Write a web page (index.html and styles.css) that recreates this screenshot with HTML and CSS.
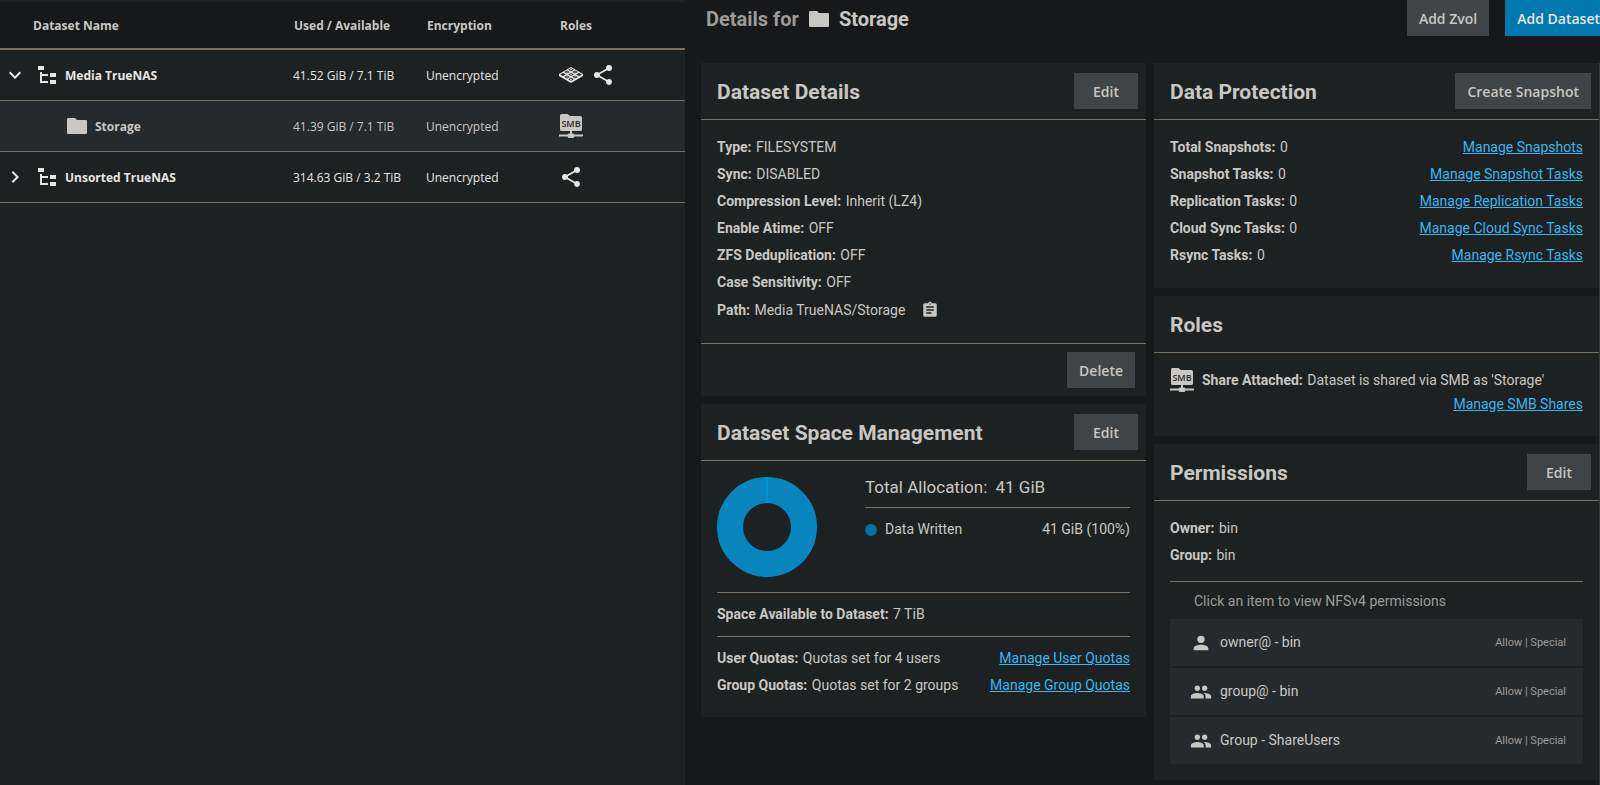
FILE: index.html
```html
<!DOCTYPE html>
<html lang="en">

<head>
    <meta charset="UTF-8">
    <meta name="viewport" content="width=device-width, initial-scale=1.0">
    <title>Datasets</title>
    <link rel="stylesheet" href="styles.css">
</head>

<body>

    <!-- shared icons -->
    <svg class="sprite" aria-hidden="true">
        <symbol id="chevron-down" viewBox="0 0 24 24"><path d="M7.41,8.58L12,13.17L16.59,8.58L18,10L12,16L6,10L7.41,8.58Z" /></symbol>
        <symbol id="chevron-right" viewBox="0 0 24 24"><path d="M8.59,16.58L13.17,12L8.59,7.41L10,6L16,12L10,18L8.59,16.58Z" /></symbol>
        <symbol id="file-tree" viewBox="0 0 24 24"><path d="M3,3H9V7H3V3M15,10H21V14H15V10M15,17H21V21H15V17M13,13H7V18H13V20H5V9H7V11H13V13Z" /></symbol>
        <symbol id="folder" viewBox="0 0 24 24"><path d="M10,4H3.2Q2,4 2,5.2V18.8Q2,20 3.2,20H20.8Q22,20 22,18.8V7.2Q22,6 20.8,6H12L10,4Z" /></symbol>
        <symbol id="share" viewBox="0 0 24 24"><path d="M18,16.08C17.24,16.08 16.56,16.38 16.04,16.85L8.91,12.7C8.96,12.47 9,12.24 9,12C9,11.76 8.96,11.53 8.91,11.3L15.96,7.19C16.5,7.69 17.21,8 18,8A3,3 0 0,0 21,5A3,3 0 0,0 18,2A3,3 0 0,0 15,5C15,5.24 15.04,5.47 15.09,5.7L8.04,9.81C7.5,9.31 6.79,9 6,9A3,3 0 0,0 3,12A3,3 0 0,0 6,15C6.79,15 7.5,14.69 8.04,14.19L15.16,18.34C15.11,18.55 15.08,18.77 15.08,19C15.08,20.61 16.39,21.91 18,21.91C19.61,21.91 20.92,20.61 20.92,19A2.92,2.92 0 0,0 18,16.08Z" /></symbol>
        <symbol id="pool" viewBox="0 0 24 24">
            <path d="M12,4L24,11V13L12,20L0,13V11Z" />
            <g class="cut">
                <path d="M12,5.2L14.8,6.7L12,8.2L9.2,6.7ZM8,7.6L10.8,9.1L8,10.6L5.2,9.1ZM16,7.6L18.8,9.1L16,10.6L13.2,9.1ZM4,10L6.8,11.5L4,13L1.2,11.5ZM12,10L14.8,11.5L12,13L9.2,11.5ZM20,10L22.800,11.5L20,13L17.200,11.5ZM8,12.4L10.8,13.9L8,15.4L5.2,13.9ZM16,12.4L18.8,13.9L16,15.4L13.2,13.9ZM12,14.8L14.8,16.3L12,17.8L9.2,16.3Z" />
            </g>
            <path d="M12,6L13.2,6.7L12,7.4L10.8,6.7ZM8,8.4L9.2,9.1L8,9.8L6.8,9.1ZM16,8.4L17.2,9.1L16,9.8L14.8,9.1ZM12,10.8L13.2,11.5L12,12.2L10.8,11.5ZM8,13.2L9.2,13.9L8,14.6L6.8,13.9ZM16,13.2L17.2,13.9L16,14.6L14.8,13.9ZM12,15.6L13.2,16.3L12,17L10.8,16.3Z" />
        </symbol>
        <symbol id="smb" viewBox="0 0 24 24">
            <path d="M2.5,0H8.5L11,2H21.5Q23,2 23,3.5V15.5Q23,17 21.5,17H13V19.5H14.5L15.5,20.5H24V22.5H15.5L14.5,24H9.5L8.5,22.5H0V20.5H8.5L9.5,19.5H11V17H2.5Q1,17 1,15.5V1.5Q1,0 2.5,0Z" />
            <text x="12" y="13" text-anchor="middle">SMB</text>
        </symbol>
        <symbol id="clipboard" viewBox="0 0 24 24"><path d="M17,9H7V7H17M17,13H7V11H17M14,17H7V15H14M12,3A1,1 0 0,1 13,4A1,1 0 0,1 12,5A1,1 0 0,1 11,4A1,1 0 0,1 12,3M19,3H14.82C14.4,1.84 13.3,1 12,1C10.7,1 9.6,1.84 9.18,3H5A2,2 0 0,0 3,5V19A2,2 0 0,0 5,21H19A2,2 0 0,0 21,19V5A2,2 0 0,0 19,3Z" /></symbol>
        <symbol id="person" viewBox="0 0 24 24"><path d="M12,4A4,4 0 0,1 16,8A4,4 0 0,1 12,12A4,4 0 0,1 8,8A4,4 0 0,1 12,4M12,14C16.42,14 20,15.79 20,18V20H4V18C4,15.79 7.58,14 12,14Z" /></symbol>
        <symbol id="people" viewBox="0 0 24 24"><path d="M16,11C17.66,11 18.99,9.66 18.99,8C18.99,6.34 17.66,5 16,5C14.34,5 13,6.34 13,8C13,9.66 14.34,11 16,11M8,11C9.66,11 10.99,9.66 10.99,8C10.99,6.34 9.66,5 8,5C6.34,5 5,6.34 5,8C5,9.66 6.34,11 8,11M8,13C5.67,13 1,14.17 1,16.5V19H15V16.5C15,14.17 10.33,13 8,13M16,13C15.71,13 15.38,13.02 15.03,13.05C16.19,13.89 17,15.02 17,16.5V19H23V16.5C23,14.17 18.33,13 16,13Z" /></symbol>
    </svg>

    <div class="layout">
        <section class="datasets">
            <table>
                <thead>
                    <tr>
                        <th class="name-col">Dataset Name</th>
                        <th class="data-col">Used / Available</th>
                        <th class="data-col">Encryption</th>
                        <th class="roles-col">Roles</th>
                    </tr>
                </thead>
                <tbody>
                    <tr>
                        <td>
                            <div class="name">
                                <button class="toggle" aria-label="Collapse Media TrueNAS"><svg class="icon"><use href="#chevron-down" /></svg></button>
                                <svg class="icon"><use href="#file-tree" /></svg>
                                <span>Media TrueNAS</span>
                            </div>
                        </td>
                        <td>41.52 GiB / 7.1 TiB</td>
                        <td>Unencrypted</td>
                        <td>
                            <div class="roles">
                                <svg class="icon"><use href="#pool" /></svg>
                                <svg class="icon"><use href="#share" /></svg>
                            </div>
                        </td>
                    </tr>
                    <tr class="selected">
                        <td>
                            <div class="name child">
                                <svg class="icon"><use href="#folder" /></svg>
                                <span>Storage</span>
                            </div>
                        </td>
                        <td>41.39 GiB / 7.1 TiB</td>
                        <td>Unencrypted</td>
                        <td>
                            <div class="roles">
                                <svg class="icon"><use href="#smb" /></svg>
                            </div>
                        </td>
                    </tr>
                    <tr>
                        <td>
                            <div class="name">
                                <button class="toggle" aria-label="Expand Unsorted TrueNAS"><svg class="icon"><use href="#chevron-right" /></svg></button>
                                <svg class="icon"><use href="#file-tree" /></svg>
                                <span>Unsorted TrueNAS</span>
                            </div>
                        </td>
                        <td>314.63 GiB / 3.2 TiB</td>
                        <td>Unencrypted</td>
                        <td>
                            <div class="roles">
                                <svg class="icon"><use href="#share" /></svg>
                            </div>
                        </td>
                    </tr>
                </tbody>
            </table>
        </section>

        <main class="details">
            <header class="details-header">
                <h1>
                    <span class="prefix">Details for</span>
                    <svg class="icon"><use href="#folder" /></svg>
                    <span>Storage</span>
                </h1>
                <div class="actions">
                    <button class="btn">Add Zvol</button>
                    <button class="btn primary">Add Dataset</button>
                </div>
            </header>

            <div class="cards">
                <div class="column">
                    <section class="card">
                        <div class="card-header">
                            <h2>Dataset Details</h2>
                            <button class="btn edit">Edit</button>
                        </div>
                        <div class="card-body">
                            <div class="row"><p><b>Type:</b> FILESYSTEM</p></div>
                            <div class="row"><p><b>Sync:</b> DISABLED</p></div>
                            <div class="row"><p><b>Compression Level:</b> Inherit (LZ4)</p></div>
                            <div class="row"><p><b>Enable Atime:</b> OFF</p></div>
                            <div class="row"><p><b>ZFS Deduplication:</b> OFF</p></div>
                            <div class="row"><p><b>Case Sensitivity:</b> OFF</p></div>
                            <div class="row path">
                                <p><b>Path:</b> Media TrueNAS/Storage</p>
                                <button class="copy" aria-label="Copy path"><svg class="icon"><use href="#clipboard" /></svg></button>
                            </div>
                        </div>
                        <div class="card-footer">
                            <button class="btn">Delete</button>
                        </div>
                    </section>

                    <section class="card">
                        <div class="card-header">
                            <h2>Dataset Space Management</h2>
                            <button class="btn edit">Edit</button>
                        </div>
                        <div class="card-body space">
                            <div class="chart">
                                <svg class="donut" viewBox="0 0 100 100">
                                    <circle cx="50" cy="50" r="37" />
                                    <path d="M50,0V26" />
                                </svg>
                                <div class="legend">
                                    <h3>Total Allocation: <span>41 GiB</span></h3>
                                    <div class="row">
                                        <p class="key">Data Written</p>
                                        <p>41 GiB (100%)</p>
                                    </div>
                                </div>
                            </div>
                            <div class="available"><p><b>Space Available to Dataset:</b> 7 TiB</p></div>
                            <div class="row">
                                <p><b>User Quotas:</b> Quotas set for 4 users</p>
                                <a href="#">Manage User Quotas</a>
                            </div>
                            <div class="row">
                                <p><b>Group Quotas:</b> Quotas set for 2 groups</p>
                                <a href="#">Manage Group Quotas</a>
                            </div>
                        </div>
                    </section>
                </div>

                <div class="column">
                    <section class="card">
                        <div class="card-header">
                            <h2>Data Protection</h2>
                            <button class="btn">Create Snapshot</button>
                        </div>
                        <div class="card-body">
                            <div class="row">
                                <p><b>Total Snapshots:</b> 0</p>
                                <a href="#">Manage Snapshots</a>
                            </div>
                            <div class="row">
                                <p><b>Snapshot Tasks:</b> 0</p>
                                <a href="#">Manage Snapshot Tasks</a>
                            </div>
                            <div class="row">
                                <p><b>Replication Tasks:</b> 0</p>
                                <a href="#">Manage Replication Tasks</a>
                            </div>
                            <div class="row">
                                <p><b>Cloud Sync Tasks:</b> 0</p>
                                <a href="#">Manage Cloud Sync Tasks</a>
                            </div>
                            <div class="row">
                                <p><b>Rsync Tasks:</b> 0</p>
                                <a href="#">Manage Rsync Tasks</a>
                            </div>
                        </div>
                    </section>

                    <section class="card">
                        <div class="card-header">
                            <h2>Roles</h2>
                        </div>
                        <div class="card-body attached">
                            <div class="share">
                                <svg class="icon"><use href="#smb" /></svg>
                                <p><b>Share Attached:</b> Dataset is shared via SMB as 'Storage'</p>
                            </div>
                            <a href="#">Manage SMB Shares</a>
                        </div>
                    </section>

                    <section class="card">
                        <div class="card-header">
                            <h2>Permissions</h2>
                            <button class="btn edit">Edit</button>
                        </div>
                        <div class="card-body permissions">
                            <div class="row"><p><b>Owner:</b> bin</p></div>
                            <div class="row"><p><b>Group:</b> bin</p></div>
                            <p class="hint">Click an item to view NFSv4 permissions</p>
                            <div class="acl">
                                <button>
                                    <svg class="icon"><use href="#person" /></svg>
                                    <span class="who">owner@ - bin</span>
                                    <span class="access">Allow | Special</span>
                                </button>
                                <button>
                                    <svg class="icon"><use href="#people" /></svg>
                                    <span class="who">group@ - bin</span>
                                    <span class="access">Allow | Special</span>
                                </button>
                                <button>
                                    <svg class="icon"><use href="#people" /></svg>
                                    <span class="who">Group - ShareUsers</span>
                                    <span class="access">Allow | Special</span>
                                </button>
                            </div>
                        </div>
                    </section>
                </div>
            </div>
        </main>
    </div>

</body>

</html>
```
FILE: styles.css
```css
:root {
    --bg: #17181a;
    --panel: #1e2122;
    --raised: #272a2d;
    --button: #404446;
    --primary: #0079b1;
    --line: #7c7063;
    --text: #c9c7c3;
    --bright: #e8e6e3;
    --muted: #9d9b97;
    --link: #38b6f1;
}

* {
    box-sizing: border-box;
}

body {
    margin: 0;
    background: var(--bg);
    color: var(--text);
    font-family: Roboto, sans-serif;
    font-size: 14px;
    overflow: hidden;
}

h1,
h2,
h3,
p {
    margin: 0;
}

b {
    font-weight: 700;
    margin-right: 1px;
}

a {
    color: var(--link);
}

button {
    border: 0;
    padding: 0;
    background: none;
    color: inherit;
    font: inherit;
    cursor: pointer;
}

.sprite {
    display: none;
}

.icon {
    display: block;
    flex: none;
    width: 24px;
    height: 24px;
    fill: currentColor;
}

.cut {
    fill: var(--panel);
}

#smb text {
    fill: var(--raised);
    font: 600 9px "Open Sans", sans-serif;
}

.layout {
    display: grid;
    grid-template-columns: 685fr 915fr;
    min-height: 100vh;
}

/* dataset tree */
.datasets {
    background: var(--panel);
    padding-top: 2px;
}

table {
    width: 100%;
    table-layout: fixed;
    border-collapse: separate;
    border-spacing: 0;
    color: var(--bright);
    font-family: "Open Sans", sans-serif;
    font-size: 12px;
}

th {
    height: 48px;
    padding: 0 0 0 1px;
    background: var(--bg);
    border-bottom: 2px solid var(--line);
    color: var(--text);
    font-weight: 700;
    text-align: left;
}

th.name-col {
    padding-left: 33px;
}

.data-col {
    width: 133px;
}

.roles-col {
    width: 126px;
}

td {
    height: 51px;
    padding: 0;
    border-bottom: 1px solid var(--line);
}

.name {
    display: flex;
    align-items: center;
    gap: 6px;
    padding-left: 3px;
    font-weight: 700;
}

.name .toggle {
    margin-right: 2px;
}

.name.child {
    padding-left: 65px;
}

.roles {
    display: flex;
    gap: 8px;
}

.selected {
    background: var(--raised);
    color: var(--text);
}

/* details pane */
.details {
    padding-left: 16px;
    display: flex;
    flex-direction: column;
}

.details-header {
    display: flex;
    justify-content: space-between;
    align-items: center;
    height: 36px;
    margin: 0 -12px 27px 5px;
}

h1 {
    display: flex;
    align-items: center;
    gap: 8px;
    padding-top: 2px;
    font-size: 20px;
    font-weight: 700;
}

.prefix {
    color: var(--muted);
}

.actions {
    display: flex;
    gap: 16px;
}

.btn {
    height: 36px;
    padding: 0 12px;
    background: var(--button);
    font-family: "Open Sans", sans-serif;
    font-weight: 600;
    white-space: nowrap;
}

.btn.edit {
    width: 64px;
}

.btn.primary {
    background: var(--primary);
    color: var(--bright);
}

.cards {
    flex: 1;
    display: grid;
    grid-template-columns: 1fr 1fr;
    gap: 8px;
    border-right: 1px solid #36393b;
}

.column {
    display: flex;
    flex-direction: column;
    gap: 8px;
}

.card {
    background: var(--panel);
}

.card-header {
    display: flex;
    justify-content: space-between;
    align-items: center;
    height: 57px;
    padding: 0 8px 0 16px;
    border-bottom: 1px solid var(--line);
}

h2 {
    padding-top: 1px;
    font-size: 21px;
    font-weight: 700;
}

.card-body {
    padding: 14px 16px 19px;
    line-height: 27px;
}

.row {
    display: flex;
    justify-content: space-between;
}

.row.path {
    justify-content: flex-start;
    align-items: center;
    gap: 16px;
    height: 28px;
}

.copy .icon {
    width: 18px;
    height: 18px;
}

.card-footer {
    display: flex;
    justify-content: flex-end;
    padding: 8px 11px;
    border-top: 1px solid var(--line);
}

/* space management */
.card-body.space {
    padding: 16px 16px 18px;
}

.chart {
    display: flex;
    gap: 48px;
    padding-bottom: 15px;
}

.donut {
    flex: none;
    width: 100px;
    height: 100px;
}

.donut circle {
    fill: none;
    stroke: #0785bf;
    stroke-width: 26;
}

.donut path {
    stroke: #0391d2;
    stroke-width: 2;
}

.legend {
    flex: 1;
}

h3 {
    margin-bottom: 8px;
    padding-bottom: 10px;
    border-bottom: 1px solid var(--line);
    font-size: 17px;
    font-weight: 400;
    line-height: 20px;
}

h3 span {
    margin-left: 4px;
}

.key {
    display: flex;
    align-items: center;
    gap: 8px;
}

.key::before {
    content: "";
    width: 12px;
    height: 12px;
    border-radius: 50%;
    background: #03709f;
}

.available {
    margin-bottom: 8px;
    padding: 8px 0;
    border: solid var(--line);
    border-width: 1px 0;
}

/* roles */
.card-body.attached {
    padding: 15px 16px 20px;
    line-height: 24px;
    text-align: right;
}

.share {
    display: flex;
    gap: 8px;
    text-align: left;
}

/* permissions */
.card-body.permissions {
    padding-bottom: 16px;
}

.hint {
    margin-top: 12px;
    padding: 6px 24px 4px;
    border-top: 1px solid var(--line);
    color: var(--muted);
}

.acl {
    display: flex;
    flex-direction: column;
    gap: 2px;
}

.acl button {
    display: flex;
    align-items: center;
    gap: 8px;
    height: 47px;
    padding: 0 17px 0 20px;
    background: var(--raised);
}

.acl .icon {
    width: 22px;
    height: 22px;
}

.access {
    margin-left: auto;
    color: var(--muted);
    font-size: 11px;
}
```
